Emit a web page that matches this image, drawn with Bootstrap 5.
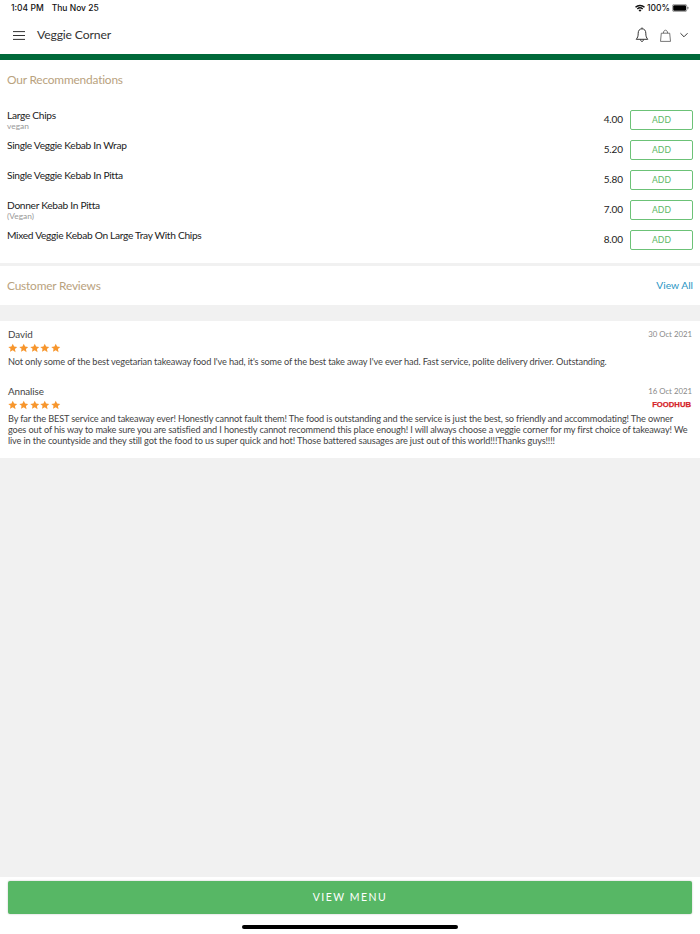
<!DOCTYPE html>
<html lang="en">
<head>
  <meta charset="UTF-8">
  <meta name="viewport" content="width=device-width, initial-scale=1.0">
  <title>Veggie Corner</title>
  <link href="https://cdn.jsdelivr.net/npm/bootstrap@5.3.2/dist/css/bootstrap.min.css" rel="stylesheet">
  <style>
    html, body { height: 934px; overflow: hidden; }
    body { background: #f1f1f1; font-family: "Lato", "Liberation Sans", sans-serif; color: #2b2b2b; }
    .app { height: 934px; }
    .status-bar { height: 16px; padding: 0 11px; font-size: 8.5px; font-weight: 500; font-family: "Inter", sans-serif; color: #111; }
    .status-right { gap: 2px; }
    .top-bar { height: 38px; padding: 0 12px 0 13px; }
    .shop-name { font-size: 12.2px; letter-spacing: -.15px; margin-left: 12px; color: #333; }
    .bag-icon { margin-left: 11px; }
    .chev-icon { margin-left: 9px; }
    .green-line { height: 6px; background: #00693a; }
    .reco { height: 203px; margin-bottom: 3px; }
    .sec-title { color: #b9a27e; font-size: 11.9px; letter-spacing: -.19px; }
    .reco-head { height: 50px; padding: 0 7px 10px; }
    .dish-row { height: 30px; padding: 0 7px; }
    .dish-name { font-size: 10.2px; letter-spacing: -.3px; line-height: 11px; color: #222; }
    .dish-note { font-size: 8.4px; line-height: 11px; color: #999; }
    .dish-price { font-size: 10px; letter-spacing: -.1px; line-height: 19px; color: #222; margin-right: 7px; }
    .add-btn { width: 63px; height: 20px; padding: 1px 0 0; font-size: 8.6px; line-height: 17px; color: #5cb865; border: 1.5px solid #6cc277; border-radius: 2px; background: #fff; }
    .reviews-head { height: 39px; padding: 0 7px; margin-bottom: 16px; }
    .view-all { color: #2a96c4; font-size: 10.3px; text-decoration: none; }
    .reviews { height: 137px; padding: 7px 8px 0; }
    .review-top { height: 12px; }
    .rev-name { font-size: 9.8px; letter-spacing: -.08px; line-height: 13px; color: #444; }
    .rev-date { font-size: 7.8px; line-height: 12px; color: #888; }
    .rev-stars { height: 16px; }
    .star-set { gap: 1.3px; }
    .rev-text { font-size: 9.2px; letter-spacing: -.13px; line-height: 11px; color: #444; margin: 0; padding-right: 3px; }
    .rev-gap { margin-bottom: 18px; }
    .fh-logo { font-family: "Liberation Sans", sans-serif; font-weight: 700; font-size: 7.7px; line-height: 10px; color: #d5232a; -webkit-text-stroke: .25px #d5232a; margin-right: 1px; }
    .spacer { height: 419px; }
    .foot { height: 57px; padding: 4px 8px 0; }
    .menu-btn { height: 33px; padding: 1px 0 0; font-size: 10.5px; letter-spacing: 1.5px; color: #fff; background: #57b765; border: 0; border-radius: 2px; box-shadow: 0 0 2px rgba(0,0,0,.25); }
    .home-bar { width: 216px; height: 4px; background: #000; border-radius: 2px; margin: 11px auto 0; }
  </style>
</head>
<body>
  <div class="app d-flex flex-column">
    <div class="status-bar bg-white d-flex justify-content-between align-items-center">
      <div class="d-flex gap-2"><span>1:04 PM</span><span>Thu Nov 25</span></div>
      <div class="status-right d-flex align-items-center">
        <svg width="10" height="8" viewBox="0 0 11 8"><path d="M0 2.6A8 8 0 0 1 11 2.6L9.9 3.800A6.400 6.400 0 0 0 1.100 3.800ZM2 4.600A5.200 5.200 0 0 1 9 4.600L7.900 5.700A3.600 3.600 0 0 0 3.100 5.700ZM3.900 6.500A2.400 2.400 0 0 1 7.100 6.500L5.500 8Z" fill="#111"/></svg>
        <span>100%</span>
        <svg width="17" height="8" viewBox="0 0 17 8"><rect x=".4" y=".4" width="14.4" height="7.2" rx="1.8" fill="none" stroke="#777" stroke-width=".7"/><rect x="1.2" y="1.2" width="12.8" height="5.6" rx="1" fill="#000"/><rect x="15.4" y="2.7" width="1" height="2.6" rx=".5" fill="#777"/></svg>
      </div>
    </div>
    <div class="top-bar bg-white d-flex align-items-center">
      <svg width="12" height="9" viewBox="0 0 12 9"><path d="M0 .6H12M0 4.500H12M0 8.400H12" stroke="#333" stroke-width="1"/></svg>
      <span class="shop-name">Veggie Corner</span>
      <div class="ms-auto d-flex align-items-center">
        <svg width="14" height="16" viewBox="0 0 14 16" fill="none" stroke="#333" stroke-width="1"><path d="M7 1.800C4.400 1.800 3.200 3.800 3.200 6.200 3.200 9.200 2.600 10.800 1.200 12.300H12.800C11.400 10.800 10.800 9.200 10.800 6.200 10.800 3.800 9.600 1.800 7 1.800ZM7 .5V1.800M5.600 12.500C5.600 15.200 8.400 15.200 8.400 12.500"/></svg>
        <svg class="bag-icon" width="11" height="13" viewBox="0 0 11 13" fill="none" stroke="#555" stroke-width=".8"><path d="M1.300 4.200H9.700L10.500 12.400H.5ZM3.400 4.200C3.400 .2 7.600 .2 7.600 4.200"/></svg>
        <svg class="chev-icon" width="8" height="6" viewBox="0 0 9 6" fill="none" stroke="#333" stroke-width="1.100"><path d="M.5 1 4.500 5 8.500 1"/></svg>
      </div>
    </div>
    <div class="green-line"></div>

    <div class="reco bg-white">
      <div class="reco-head d-flex align-items-center"><span class="sec-title">Our Recommendations</span></div>
      <div class="dish-row d-flex">
        <div><div class="dish-name">Large Chips</div><div class="dish-note">vegan</div></div>
        <div class="ms-auto dish-price">4.00</div><button class="btn add-btn">ADD</button>
      </div>
      <div class="dish-row d-flex">
        <div><div class="dish-name">Single Veggie Kebab In Wrap</div></div>
        <div class="ms-auto dish-price">5.20</div><button class="btn add-btn">ADD</button>
      </div>
      <div class="dish-row d-flex">
        <div><div class="dish-name">Single Veggie Kebab In Pitta</div></div>
        <div class="ms-auto dish-price">5.80</div><button class="btn add-btn">ADD</button>
      </div>
      <div class="dish-row d-flex">
        <div><div class="dish-name">Donner Kebab In Pitta</div><div class="dish-note">(Vegan)</div></div>
        <div class="ms-auto dish-price">7.00</div><button class="btn add-btn">ADD</button>
      </div>
      <div class="dish-row d-flex">
        <div><div class="dish-name">Mixed Veggie Kebab On Large Tray With Chips</div></div>
        <div class="ms-auto dish-price">8.00</div><button class="btn add-btn">ADD</button>
      </div>
    </div>

    <div class="reviews-head bg-white d-flex align-items-center justify-content-between">
      <span class="sec-title">Customer Reviews</span>
      <a href="#" class="view-all">View All</a>
    </div>

    <div class="reviews bg-white">
      <div class="review-top d-flex justify-content-between"><span class="rev-name">David</span><span class="rev-date">30 Oct 2021</span></div>
      <div class="rev-stars d-flex align-items-center"><div class="star-set d-flex" id="stars1"></div></div>
      <p class="rev-text rev-gap">Not only some of the best vegetarian takeaway food I've had, it's some of the best take away I've ever had. Fast service, polite delivery driver. Outstanding.</p>
      <div class="review-top d-flex justify-content-between"><span class="rev-name">Annalise</span><span class="rev-date">16 Oct 2021</span></div>
      <div class="rev-stars d-flex align-items-center justify-content-between"><div class="star-set d-flex" id="stars2"></div><span class="fh-logo">FOODHUB</span></div>
      <p class="rev-text">By far the BEST service and takeaway ever! Honestly cannot fault them! The food is outstanding and the service is just the best, so friendly and accommodating! The owner goes out of his way to make sure you are satisfied and I honestly cannot recommend this place enough! I will always choose a veggie corner for my first choice of takeaway! We live in the countyside and they still got the food to us super quick and hot! Those battered sausages are just out of this world!!!Thanks guys!!!!</p>
    </div>

    <div class="spacer"></div>

    <div class="foot bg-white">
      <button class="btn menu-btn w-100">VIEW MENU</button>
      <div class="home-bar"></div>
    </div>
  </div>
  <script src="https://cdn.jsdelivr.net/npm/bootstrap@5.3.2/dist/js/bootstrap.bundle.min.js"></script>
  <script>
    const star = '<svg width="9.5" height="10" viewBox="0 0 24 24"><path fill="#f7962d" d="M12 1l3.400 7.300 7.900 1-5.800 5.500 1.500 7.900L12 17.800l-7 3.900 1.500-7.900L.7 9.300l7.900-1z"/></svg>';
    document.getElementById('stars1').innerHTML = star.repeat(5);
    document.getElementById('stars2').innerHTML = star.repeat(5);
  </script>
</body>
</html>
